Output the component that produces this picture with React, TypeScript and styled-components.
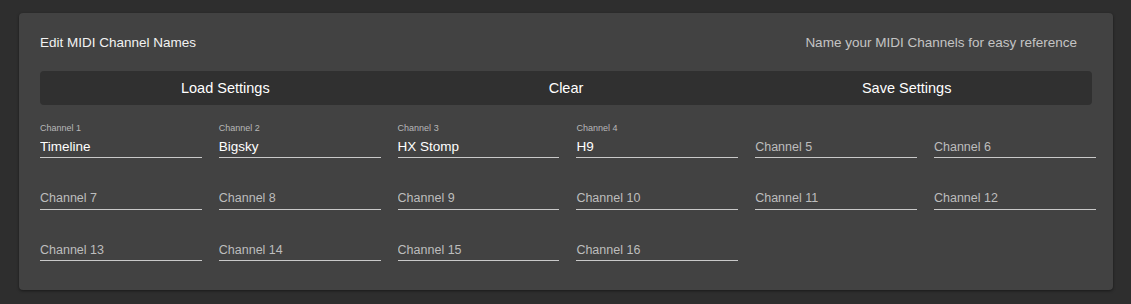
import React from 'react';
import styled, { createGlobalStyle } from 'styled-components';

const GlobalStyle = createGlobalStyle`
    body {
        margin: 0;
        background: #2e2e2e;
        font-family: 'Liberation Sans', Arial, Helvetica, sans-serif;
    }
`;

const Page = styled.div`
    padding: 13px 18px 14px 19px;
`;

const Card = styled.section`
    background: #424242;
    border-radius: 4px;
    box-shadow: 0 1px 3px rgba(0, 0, 0, 0.45);
    padding: 21px 21px 29px 21px;
`;

const Header = styled.div`
    display: flex;
    justify-content: space-between;
    align-items: center;
    height: 17px;
    padding-right: 15px;
`;

const Title = styled.h2`
    margin: 0;
    font-size: 13.5px;
    font-weight: 400;
    color: #f2f2f2;
`;

const Subtitle = styled.span`
    font-size: 13.5px;
    color: #c4c4c4;
`;

const ButtonBar = styled.div`
    display: grid;
    grid-template-columns: repeat(3, 1fr);
    margin-top: 20px;
    padding: 0 15px;
    height: 34px;
    background: #303030;
    border-radius: 4px;
`;

const BarButton = styled.button`
    border: none;
    background: transparent;
    color: #ffffff;
    font-family: inherit;
    font-size: 14.5px;
    cursor: pointer;
    padding: 0;
`;

const FieldGrid = styled.div`
    display: grid;
    grid-template-columns: repeat(6, 161.8px);
    column-gap: 17px;
    row-gap: 15.5px;
    margin-top: 17px;
    margin-right: -4px;
`;

const Field = styled.label`
    display: flex;
    flex-direction: column;
    height: 36px;
`;

const FieldLabel = styled.span<{ $visible: boolean }>`
    height: 13px;
    padding-top: 1px;
    font-size: 9px;
    line-height: 11px;
    color: #b8b8b8;
    visibility: ${p => (p.$visible ? 'visible' : 'hidden')};
`;

const FieldInput = styled.input`
    flex: 1;
    min-width: 0;
    border: none;
    border-bottom: 1px solid #c9c9c9;
    background: transparent;
    color: #ffffff;
    font-family: inherit;
    font-size: 13.5px;
    padding: 0 0 1px 0;
    outline: none;

    &::placeholder {
        color: #bdbdbd;
        font-size: 12.5px;
        opacity: 1;
    }
`;

const initialNames = ['Timeline', 'Bigsky', 'HX Stomp', 'H9'];

const channels = Array.from({ length: 16 }, (_, i) => ({
    number: i + 1,
    name: initialNames[i] ?? '',
}));

export default function App() {
    const [names, setNames] = React.useState(channels.map(c => c.name));

    const setName = (index: number, value: string) => {
        setNames(prev => prev.map((n, i) => (i === index ? value : n)));
    };

    return (
        <Page>
            <GlobalStyle />
            <Card>
                <Header>
                    <Title>Edit MIDI Channel Names</Title>
                    <Subtitle>Name your MIDI Channels for easy reference</Subtitle>
                </Header>
                <ButtonBar>
                    <BarButton>Load Settings</BarButton>
                    <BarButton onClick={() => setNames(channels.map(() => ''))}>Clear</BarButton>
                    <BarButton>Save Settings</BarButton>
                </ButtonBar>
                <FieldGrid>
                    {channels.map((channel, i) => (
                        <Field key={channel.number}>
                            <FieldLabel $visible={names[i] !== ''}>Channel {channel.number}</FieldLabel>
                            <FieldInput
                                value={names[i]}
                                placeholder={`Channel ${channel.number}`}
                                onChange={e => setName(i, e.target.value)}
                            />
                        </Field>
                    ))}
                </FieldGrid>
            </Card>
        </Page>
    );
}
